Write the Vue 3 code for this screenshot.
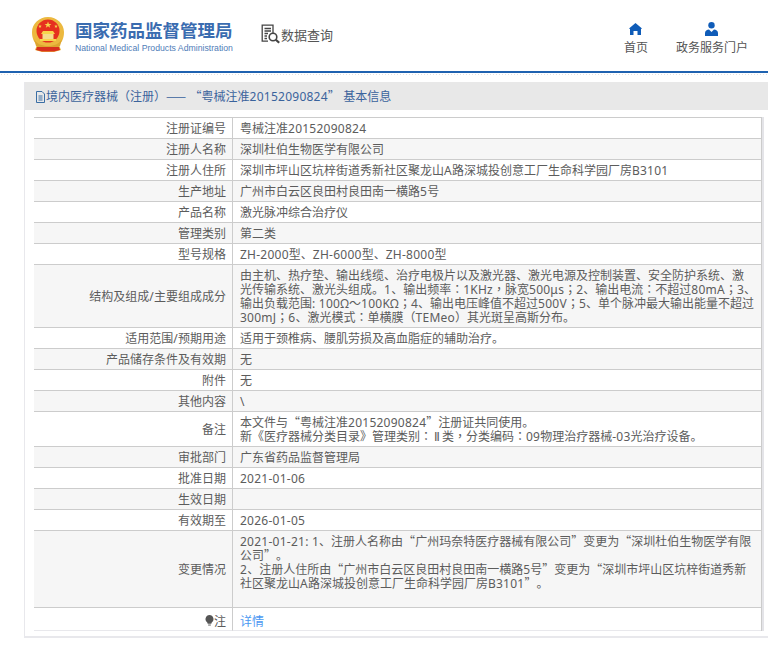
<script setup>
const rows = [
  ['注册证编号', ['粤械注准20152090824']],
  ['注册人名称', ['深圳杜伯生物医学有限公司']],
  ['注册人住所', ['深圳市坪山区坑梓街道秀新社区聚龙山A路深城投创意工厂生命科学园厂房B3101']],
  ['生产地址', ['广州市白云区良田村良田南一横路5号']],
  ['产品名称', ['激光脉冲综合治疗仪']],
  ['管理类别', ['第二类']],
  ['型号规格', ['ZH-2000型、ZH-6000型、ZH-8000型']],
  ['结构及组成/主要组成成分', [
    '由主机、热疗垫、输出线缆、治疗电极片以及激光器、激光电源及控制装置、安全防护系统、激',
    '光传输系统、激光头组成。1、输出频率：1KHz，脉宽500μs；2、输出电流：不超过80mA；3、',
    '输出负载范围: 100Ω～100KΩ；4、输出电压峰值不超过500V；5、单个脉冲最大输出能量不超过',
    '300mJ；6、激光模式：单横膜（TEMeo）其光斑呈高斯分布。',
  ]],
  ['适用范围/预期用途', ['适用于颈椎病、腰肌劳损及高血脂症的辅助治疗。']],
  ['产品储存条件及有效期', ['无']],
  ['附件', ['无']],
  ['其他内容', ['\\']],
  ['备注', ['本文件与“粤械注准20152090824”注册证共同使用。', '新《医疗器械分类目录》管理类别：Ⅱ类，分类编码：09物理治疗器械-03光治疗设备。']],
  ['审批部门', ['广东省药品监督管理局']],
  ['批准日期', ['2021-01-06']],
  ['生效日期', ['']],
  ['有效期至', ['2026-01-05']],
  ['变更情况', [
    '2021-01-21: 1、注册人名称由“广州玛奈特医疗器械有限公司”变更为“深圳杜伯生物医学有限',
    '公司”。',
    '2、注册人住所由“广州市白云区良田村良田南一横路5号”变更为“深圳市坪山区坑梓街道秀新',
    '社区聚龙山A路深城投创意工厂生命科学园厂房B3101”。',
    '',
  ]],
]
const title = '境内医疗器械（注册）—— “粤械注准20152090824” 基本信息'

function seg(text) {
  const parts = text.match(/[A-Za-z0-9:\\\-.\/ Ωμ]+|[“”—]+|[，：；（）～]+|Ⅱ|[^A-Za-z0-9:\\\-.\/ Ωμ“”—，：；（）～Ⅱ]+/g) || []
  return parts.map((t) => {
    let c = 'han'
    if (/^[A-Za-z0-9:\\\-.\/ Ωμ]/.test(t)) c = 'latin'
    else if (/^[“”—]/.test(t)) c = 'quote'
    else if (/^[，：；（）～]/.test(t)) c = 'mid'
    else if (t === 'Ⅱ') c = 'roman'
    return { t, c }
  })
}
</script>

<template>
  <div class="page">
    <header class="top">
      <div class="brand">
        <svg class="emblem" viewBox="0 0 32 35" width="32" height="35">
          <path d="M16 0C7 0 0 7 0 15c0 6 2 10 5 13l-2 5 7 2h12l7-2-2-5c3-3 5-7 5-13C32 7 25 0 16 0z" fill="#ecb93f"/>
          <circle cx="16" cy="14" r="11.500" fill="#e6301f"/>
          <path d="M16 4.500l.9 2.400h2.500l-2 1.500.8 2.400-2.200-1.500-2.200 1.500.8-2.400-2-1.500h2.500z" fill="#f7d54c"/>
          <path d="M8 7.500l.5 1.300h1.300l-1 .8.400 1.300L8 10.100l-1.200.8.400-1.300-1-.8h1.300zM24 7.500l.5 1.300h1.300l-1 .8.400 1.300-1.200-.8-1.200.8.400-1.300-1-.8h1.300z" fill="#f7d54c"/>
          <path d="M9 17l2-3h10l2 3z" fill="#f7d54c"/>
          <rect x="10.500" y="17" width="11" height="5" fill="#f5dc8c"/>
          <path d="M8 22h16v2H8z" fill="#f7d54c"/>
          <path d="M2 22c3 5 8 7 14 7s11-2 14-7l-2 7-6 3H10l-6-3z" fill="#dca52f"/>
          <path d="M5 30h22l1 3-6 1.500H10L4 33z" fill="#d8301e"/>
        </svg>
        <div class="brand-text">
          <div class="cn">国家药品监督管理局</div>
          <div class="en">National Medical Products Administration</div>
        </div>
      </div>
      <div class="query">
        <svg viewBox="0 0 20 20" width="20" height="20" fill="none" stroke="#444" stroke-width="1.300">
          <path d="M12 9.500V1.200H1.200v16H7"/>
          <path d="M3.500 4.500H10M3.500 7H10M3.500 9.500H7M3.500 12H6M3.500 14.500H6"/>
          <circle cx="12" cy="13" r="3.800" stroke-width="1.600"/>
          <path d="M14.800 15.800l3.400 3" stroke-width="2.200"/>
        </svg>
        <span>数据查询</span>
      </div>
      <nav class="nav">
        <div class="nav-item">
          <svg viewBox="0 0 13 12" width="13" height="12"><path d="M6.500 0L13 5.500 12 6v6H8.500V8h-4v4H1V6L0 5.500z" fill="#0f5cb8"/></svg>
          <span>首页</span>
        </div>
        <div class="nav-item">
          <svg viewBox="0 0 13 14" width="13" height="14"><circle cx="6.500" cy="3.200" r="3.200" fill="#0f5cb8"/><path d="M0 14v-3c0-2 2-3.500 4-3.500L6.500 10 9 7.500c2 0 4 1.500 4 3.500v3z" fill="#0f5cb8"/></svg>
          <span>政务服务门户</span>
        </div>
      </nav>
    </header>
    <div class="strip"></div>
    <section class="panel">
      <h2 class="panel-title">
        <svg viewBox="0 0 11 12" width="11" height="12" fill="none" stroke="#3a6ea5"><path d="M1.500.5h5.500l2.500 2.500v8.500h-8zM3.500 5h4M3.500 7h4M3.500 9h4"/></svg>
        <span><span v-for="(s, k) in seg(title)" :key="k" :class="s.c">{{ s.t }}</span></span>
      </h2>
      <div class="table-wrap">
        <table class="info">
          <tbody>
            <tr v-for="r in rows" :key="r[0]">
              <th><span v-for="(s, k) in seg(r[0])" :key="k" :class="s.c">{{ s.t }}</span></th>
              <td>
                <div v-for="(l, i) in r[1]" :key="i" class="line"><span v-for="(s, k) in seg(l)" :key="k" :class="s.c">{{ s.t }}</span></div>
              </td>
            </tr>
            <tr class="last">
              <th>
                <svg viewBox="0 0 10 12" width="9" height="11"><path d="M5 0a4.500 4.500 0 0 1 2.500 8.200L7 9.500H3l-.5-1.300A4.500 4.500 0 0 1 5 0z" fill="#555"/><rect x="3.500" y="10.300" width="3" height="1.500" fill="#888"/></svg>注
              </th>
              <td><span class="link">详情</span></td>
            </tr>
          </tbody>
        </table>
      </div>
    </section>
  </div>
</template>

<style>
html, body { margin: 0; background: #fff; overflow: hidden; }
</style>
<style scoped>
.page {
  width: 768px;
  height: 646px;
  overflow: hidden;
  font-family: "Liberation Sans", "Noto Sans CJK SC", sans-serif;
  color: #5c5c5c;
  text-spacing-trim: space-all;
}
.latin, .quote, .mid, .roman, .han { line-height: 0; }
.latin { font-family: "Noto Sans", "Liberation Sans", sans-serif; letter-spacing: .25px; }
.quote { font-family: "Noto Sans CJK SC", sans-serif; }
.mid { font-family: "Noto Sans CJK TC", sans-serif; }
.roman { font-family: "DejaVu Sans", sans-serif; padding: 0 2px; }
.top {
  box-sizing: border-box;
  display: flex;
  align-items: flex-start;
  border-bottom: 2px solid #1f62b0;
  height: 73px;
}
.brand { display: flex; margin: 17px 0 0 32px; }
.brand-text { margin-left: 11px; }
.cn {
  font-size: 17.500px;
  line-height: 22px;
  margin-top: 3px;
  font-weight: 700;
  color: #3a6cb0;
}
.en { font-size: 8.700px; line-height: 12px; margin-top: 0; color: #4f7db8; white-space: nowrap; }
.query { display: flex; align-items: center; margin: 24px 0 0 28px; font-size: 13px; color: #555; height: 20px; }
.nav { display: flex; margin-left: auto; margin-top: 22px; padding-right: 20px; }
.nav-item { display: flex; flex-direction: column; align-items: center; font-size: 12px; color: #555; margin-left: 28px; }
.nav-item svg { height: 14px; }
.nav-item span { margin-top: 4px; line-height: 16px; }
.strip {
  height: 3px;
  margin-bottom: 6px;
  background-image: radial-gradient(#e2e2e2 .7px, transparent .7px);
  background-size: 3px 3px;
}
.panel {
  margin-left: 24px;
  margin-right: -6px;
  height: 556px;
  box-sizing: border-box;
  border: 2px solid #e8e8ec;
  border-width: 0 1px 2px 1px;
}
.panel-title {
  margin: 0;
  height: 28px;
  background: #e8e8e8;
  font-weight: 400;
  font-size: 12px;
  color: #3a639c;
  padding: 1px 0 0 10px;
  box-sizing: border-box;
  display: flex;
  align-items: center;
  white-space: nowrap;
}
.table-wrap { padding: 7px 0 0 9px; }
.info {
  border-collapse: separate;
  border-spacing: 0;
  width: 728px;
  table-layout: fixed;
  font-size: 12px;
  border-top: 1px solid #ccc;
  border-right: 1px solid #ccc;
  box-shadow: 2px 0 0 #e4e4e8;
}
.info th, .info td { padding: 4px 6px 2px; line-height: 14px; vertical-align: middle; border-bottom: 1px solid #ccc; }
.info th { width: 186px; text-align: right; font-weight: 400; border-right: 1px solid #ccc; }
.info td { padding-left: 7px; padding-right: 0; }
.line { min-height: 14px; white-space: nowrap; }
.info tr:nth-child(even) { background: #f6f6f6; }
.last th, .last td { border-bottom: 1px solid #e8e8ec; height: 16px; padding-top: 6px; padding-bottom: 0; }
.link { color: #4b98f2; font-size: 12px; }
svg { flex: none; }
</style>
